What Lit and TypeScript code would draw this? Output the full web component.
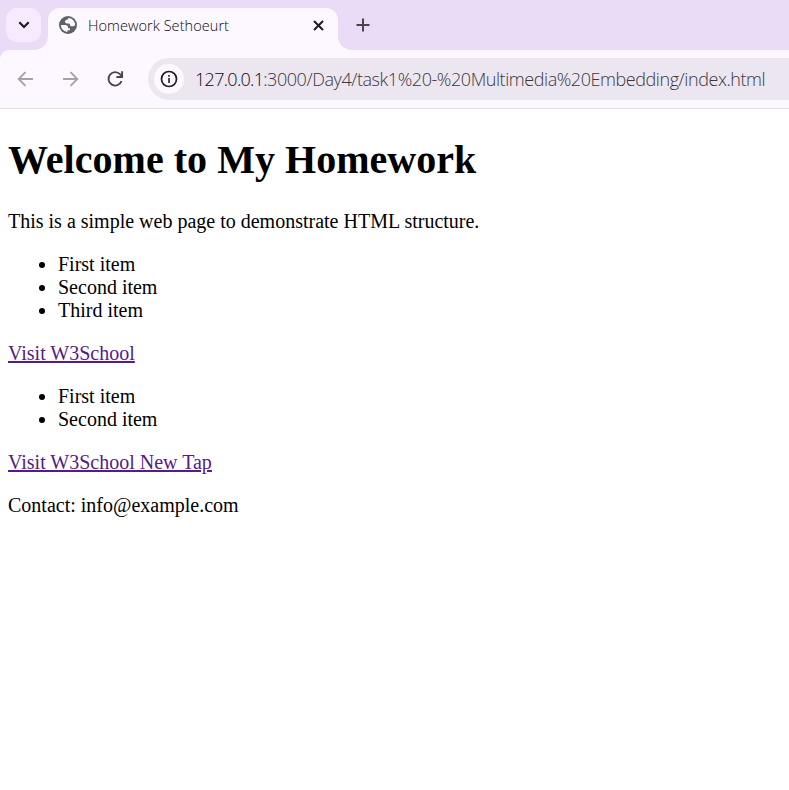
import { LitElement, html, css } from "lit";
import { customElement } from "lit/decorators.js";

@customElement("browser-chrome")
class BrowserChrome extends LitElement {
  static styles = css`
    :host { display: block; font-family: "Open Sans", "Noto Sans", sans-serif; }
    svg { display: block; flex: none; }
    .strip { display: flex; height: 50px; background: #eadcf6; }
    .search { width: 35px; height: 34px; margin: 8px 0 0 6px; border-radius: 11px; background: #f8eafe; display: flex; align-items: center; justify-content: center; }
    .tab { position: relative; box-sizing: border-box; width: 290px; height: 42px; margin: 8px 0 0 7px; padding: 0 12px 8px 11px; border-radius: 12px 12px 0 0; background: #fdf7ff; display: flex; align-items: center; }
    .tab::before, .tab::after { content: ""; position: absolute; bottom: 0; width: 14px; height: 14px; }
    .tab::before { left: -14px; background: radial-gradient(circle at 0 0, transparent 13.5px, #fdf7ff 14.5px); }
    .tab::after { right: -14px; background: radial-gradient(circle at 100% 0, transparent 13.5px, #fdf7ff 14.5px); }
    .title { flex: 1; margin-left: 11px; padding-top: 1px; font-size: 14.5px; font-weight: 300; letter-spacing: 0.06px; line-height: 20px; color: #0c0a0e; white-space: nowrap; }
    .new { margin: 17px 0 0 17px; }
    .bar { box-sizing: border-box; height: 59px; background: #fdf7ff; border-bottom: 1px solid #e7e0e9; border-top-left-radius: 9px; display: flex; align-items: center; padding-left: 16px; }
    .corner { background: #eadcf6; }
    .reload { margin: 0 23px 0 25px; }
    .fwd { margin-left: 24px; }
    .omni { flex: 1; height: 42px; border-radius: 21px 0 0 21px; background: #ece6f0; display: flex; align-items: center; padding-left: 6px; overflow: hidden; }
    .info { flex: none; width: 30px; height: 30px; border-radius: 50%; background: #fdf7ff; display: flex; align-items: center; justify-content: center; }
    .url { margin-left: 11px; font-size: 18px; font-weight: 300; letter-spacing: -0.43px; line-height: 24px; white-space: nowrap; color: #3a363f; }
    .host { color: #0c0a0e; letter-spacing: -0.7px; }
  `;

  render() {
    return html`
      <div class="strip">
        <div class="search">
          <svg width="12" height="8" viewBox="0 0 12 8" fill="none" stroke="#1d1b20" stroke-width="2.2"><path d="M1.3 1.3 6 6l4.7-4.7" /></svg>
        </div>
        <div class="tab">
          <svg width="18" height="18" viewBox="0 0 18 18">
            <circle cx="9" cy="9" r="9" fill="#5f6368" />
            <path fill="#fdf7ff" d="M10 1.900C9 2.300 8.600 3 8.600 3.700H7.800C6.800 3.700 6 4.500 6 5.500s.8 1.900 1.800 1.900h1.700c1 0 1.700.7 1.700 1.700v.9c.9 0 1.800.3 2.500.3.800 0 1.200-.8 2.400-.8A7.200 7.200 0 0 0 10 1.900zM1.900 9h4.300c1.700 0 2.900.9 2.900 2.400v.9h1.800v1.900H8.500v1.900A7.200 7.200 0 0 1 1.900 9z" />
          </svg>
          <span class="title">Homework Sethoeurt</span>
          <svg width="15" height="15" viewBox="0 0 15 15" stroke="#1d1b20" stroke-width="2"><path d="m3 3 9 9M12 3l-9 9" /></svg>
        </div>
        <svg class="new" width="16" height="16" viewBox="0 0 16 16" stroke="#49454e" stroke-width="2"><path d="M8 1.500v13M1.500 8h13" /></svg>
      </div>
      <div class="corner">
        <div class="bar">
          <svg width="20" height="20" viewBox="0 0 20 20" fill="none" stroke="#a7a1aa" stroke-width="1.900"><path d="M17 10H3M9.500 3.200 2.700 10l6.800 6.800" /></svg>
          <svg class="fwd" width="20" height="20" viewBox="0 0 20 20" fill="none" stroke="#a7a1aa" stroke-width="1.900"><path d="M3 10h14M10.500 3.200l6.800 6.800-6.800 6.800" /></svg>
          <svg class="reload" width="20" height="20" viewBox="0 0 20 20" fill="none" stroke="#49454e" stroke-width="1.900"><path d="M16.500 12.200A6.700 6.700 0 1 1 15.300 5.500l1.500 1.700M17.100 2.300v5.700h-5.700" /></svg>
          <div class="omni">
            <div class="info">
              <svg width="18" height="18" viewBox="0 0 18 18"><circle cx="9" cy="9" r="7.500" fill="none" stroke="#1d1b20" stroke-width="1.700" /><path fill="#1d1b20" d="M8.200 8h1.600v5H8.200zM8.200 5h1.600v1.700H8.200z" /></svg>
            </div>
            <span class="url"><span class="host">127.0.0.1</span>:3000/Day4/task1%20-%20Multimedia%20Embedding/index.html</span>
          </div>
        </div>
      </div>
    `;
  }
}

@customElement("app-root")
class AppRoot extends LitElement {
  static styles = css`
    :host { display: block; height: 790px; overflow: hidden; background: #fff; color: #000; font: 20px/23px "Liberation Serif", "Times New Roman", serif; }
    main { padding: 0 8px; }
    h1 { margin: 28px 0 27px; font-size: 40px; line-height: 46px; letter-spacing: 0.03px; }
    p { margin: 20px 0; }
    ul { margin: 20px 0; padding-left: 50px; }
    a { color: #551a8b; text-decoration: underline; }
  `;

  private visit(e: Event) {
    e.preventDefault();
  }

  render() {
    return html`
      <browser-chrome></browser-chrome>
      <main>
        <h1>Welcome to My Homework</h1>
        <p>This is a simple web page to demonstrate HTML structure.</p>
        <ul>
          <li>First item</li>
          <li>Second item</li>
          <li>Third item</li>
        </ul>
        <a href="#" @click=${this.visit}>Visit W3School</a>
        <ul>
          <li>First item</li>
          <li>Second item</li>
        </ul>
        <a href="#" @click=${this.visit}>Visit W3School New Tap</a>
        <p>Contact: info@example.com</p>
      </main>
    `;
  }
}
